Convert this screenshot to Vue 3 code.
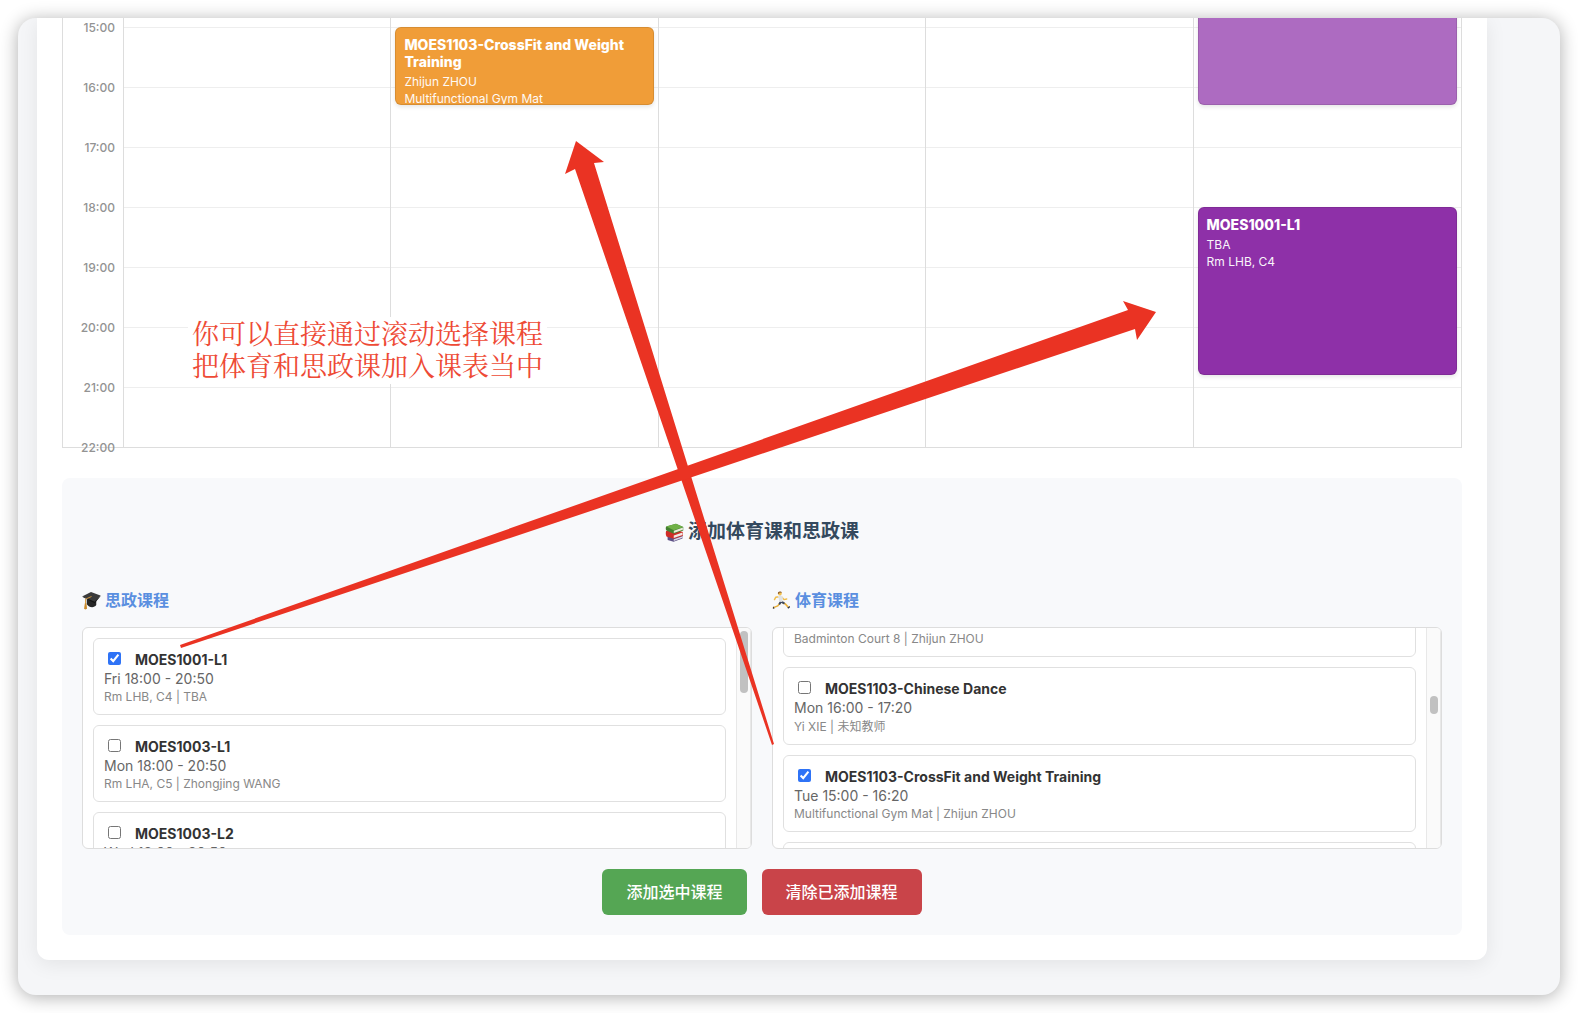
<script setup>
import { onMounted, ref } from 'vue'

const FIRST_HOUR = 15
const HOUR_HEIGHT = 60
const TOP_STRIP = 9

const hours = ['15:00', '16:00', '17:00', '18:00', '19:00', '20:00', '21:00', '22:00']

const days = [
  { name: 'Mon', events: [] },
  {
    name: 'Tue',
    events: [
      {
        title: 'MOES1103-CrossFit and Weight Training',
        lines: ['Zhijun ZHOU', 'Multifunctional Gym Mat'],
        start: 15 * 60,
        length: 80,
        tone: 'orange',
      },
    ],
  },
  { name: 'Wed', events: [] },
  { name: 'Thu', events: [] },
  {
    name: 'Fri',
    events: [
      { title: '', lines: [], start: 13 * 60 + 30, length: 170, tone: 'lilac' },
      { title: 'MOES1001-L1', lines: ['TBA', 'Rm LHB, C4'], start: 18 * 60, length: 170, tone: 'purple' },
    ],
  },
]

const politics = ref([
  { id: 'p1', name: 'MOES1001-L1', time: 'Fri 18:00 - 20:50', info: 'Rm LHB, C4 | TBA', checked: true },
  { id: 'p2', name: 'MOES1003-L1', time: 'Mon 18:00 - 20:50', info: 'Rm LHA, C5 | Zhongjing WANG', checked: false },
  { id: 'p3', name: 'MOES1003-L2', time: 'Wed 18:00 - 20:50', info: '', checked: false },
])

const sports = ref([
  { id: 's1', name: '', time: '', info: 'Badminton Court 8 | Zhijun ZHOU', checked: false },
  { id: 's2', name: 'MOES1103-Chinese Dance', time: 'Mon 16:00 - 17:20', info: 'Yi XIE | 未知教师', lang: 'zh', checked: false },
  { id: 's3', name: 'MOES1103-CrossFit and Weight Training', time: 'Tue 15:00 - 16:20', info: 'Multifunctional Gym Mat | Zhijun ZHOU', checked: true },
  { id: 's4', name: '', time: '', info: '', checked: false },
])

const sportsList = ref(null)

function place(event) {
  return {
    top: `${TOP_STRIP + ((event.start - FIRST_HOUR * 60) * HOUR_HEIGHT) / 60}px`,
    height: `${(event.length * HOUR_HEIGHT) / 60 - 2}px`,
  }
}

onMounted(() => {
  sportsList.value.scrollTop = 58
})
</script>

<template>
  <div class="window">
    <main class="card">
      <div class="timetable">
        <div class="hours">
          <span v-for="hour in hours" :key="hour" class="hour">{{ hour }}</span>
        </div>
        <div class="days">
          <div v-for="day in days" :key="day.name" class="day">
            <div class="strip"></div>
            <div v-for="n in 7" :key="n" class="slot"></div>
            <article
              v-for="event in day.events"
              :key="event.start"
              class="event"
              :class="event.tone"
              :style="place(event)"
            >
              <strong v-if="event.title" class="event-title">{{ event.title }}</strong>
              <span v-for="line in event.lines" :key="line" class="event-line">{{ line }}</span>
            </article>
          </div>
        </div>
      </div>

      <section class="picker">
        <h2 class="picker-title">
          <svg class="emoji" viewBox="0 0 20 20" aria-hidden="true">
            <path d="M2.600 13.500l6.600 2.200 9.200-3v3.500l-9.400 3.600-6.200-2z" fill="#5d5186" />
            <path d="M9.200 17.200l9.200-3.300v1.600l-9.200 3.400z" fill="#dcd8e6" />
            <path d="M1.200 8.500L10 6.500l8.800 3v4l-9.700 3.200-7.600-2.500C.6 12.500.6 10 1.200 8.500z" fill="#cf2d27" />
            <path d="M9.200 13.200l9.200-3.100v2.500l-9.200 3.100z" fill="#f1e9e6" />
            <path d="M1.200 3.700L11.500.8l7.700 3.300v3.700L9.100 11.400 1.500 8C.6 6.800.6 5 1.200 3.700z" fill="#437f30" />
            <path d="M1.400 3.700L11.500.8l7.700 3.300-10 3.500z" fill="#70b147" />
            <path d="M9.300 8.200l9.500-3.400v2.400l-9.500 3.300z" fill="#e9eddc" />
          </svg>
          <span>添加体育课和思政课</span>
        </h2>

        <div class="columns">
          <div class="column">
            <h3 class="column-title">
              <svg class="emoji" viewBox="0 0 20 20" aria-hidden="true">
                <path d="M5 8.500l10 2v4.300c-1.500 2.300-4.800 3-7.500 1.400C6 15.400 5.200 14.500 5 13.500z" fill="#262626" />
                <path d="M.6 5.500L9.500 1.100l9.900 3.600-6.100 7.400z" fill="#3b3b3b" />
                <path d="M.6 5.500l12.700 5.900 6.100-6.700v.9l-6 7.400L.7 6.400z" fill="#141414" />
                <path d="M10 5.800L3.700 8.600v5" fill="none" stroke="#d79a3a" stroke-width="1" />
                <path d="M3 13h1.700l.6 5.800-1.800.6-1.300-.7z" fill="#c98a2c" />
              </svg>
              <span>思政课程</span>
            </h3>
            <div class="list">
              <div class="scroll">
                <div v-for="course in politics" :key="course.id" class="course">
                  <label class="course-head" :for="course.id">
                    <input :id="course.id" v-model="course.checked" type="checkbox" class="tick" />
                    <span class="course-name">{{ course.name }}</span>
                  </label>
                  <div class="course-time">{{ course.time }}</div>
                  <div class="course-info" :lang="course.lang">{{ course.info }}</div>
                </div>
              </div>
              <div class="track"><div class="thumb thumb-long"></div></div>
            </div>
          </div>

          <div class="column">
            <h3 class="column-title">
              <svg class="emoji" viewBox="0 0 20 20" aria-hidden="true">
                <path d="M9 12.200l-3 3.500-4.500 1.800" fill="none" stroke="#e9b13c" stroke-width="1.700" stroke-linecap="round" />
                <path d="M10 11.500l4 2.200 2.800 3" fill="none" stroke="#e9b13c" stroke-width="1.700" stroke-linecap="round" />
                <path d="M9.600 11L8 13.400M9.800 11.200l2.600 1.500" fill="none" stroke="#3d4a63" stroke-width="2.200" stroke-linecap="round" />
                <path d="M7 6L4 6.500 2.600 9M10.500 6.500l2.200 2.600 2.800-.7" fill="none" stroke="#f0bd49" stroke-width="1.500" stroke-linecap="round" stroke-linejoin="round" />
                <path d="M5.800 5.300l3.700-.8 2 2.300-.6 4.700-3.300-.3-.6-4z" fill="#dfe2e4" />
                <circle cx="8.300" cy="2.700" r="2" fill="#f3c14e" />
                <path d="M6.200 2.700C6 .9 7.500.1 9 .5c1 .2 1.500.8 1.400 1.400L8 1.600l-.7 1.500z" fill="#8a5a2b" />
                <path d="M1.300 16.100l1.500 2.200-1.900.4zM16.200 17.300l2.600-1.600.2 1.300-2 1.600z" fill="#2f3340" />
              </svg>
              <span>体育课程</span>
            </h3>
            <div class="list">
              <div ref="sportsList" class="scroll">
                <div v-for="course in sports" :key="course.id" class="course">
                  <label class="course-head" :for="course.id">
                    <input :id="course.id" v-model="course.checked" type="checkbox" class="tick" />
                    <span class="course-name">{{ course.name }}</span>
                  </label>
                  <div class="course-time">{{ course.time }}</div>
                  <div class="course-info" :lang="course.lang">{{ course.info }}</div>
                </div>
              </div>
              <div class="track"><div class="thumb thumb-short"></div></div>
            </div>
          </div>
        </div>

        <div class="actions">
          <button type="button" class="button add">添加选中课程</button>
          <button type="button" class="button clear">清除已添加课程</button>
        </div>
      </section>
    </main>

    <p class="note">你可以直接通过滚动选择课程<br />把体育和思政课加入课表当中</p>
    <svg class="arrows" viewBox="18 18 1542 977" aria-hidden="true">
      <polygon points="576,141 604,162 594,163 774,744 772,745 575,169 565,174" />
      <polygon points="1156,312 1137,340 1135,329 181,648 180,645 1128,310 1123,301" />
    </svg>
  </div>
</template>

<style>
body {
  margin: 0;
  background: #fff;
}
</style>

<style scoped>
.window {
  position: relative;
  box-sizing: border-box;
  margin: 18px;
  padding: 0 73px 35px 19px;
  overflow: hidden;
  border-radius: 18px;
  background: #f5f6f8;
  box-shadow: 0 2px 18px rgba(0, 0, 0, 0.32);
  font-family: Inter, "Noto Sans CJK SC", sans-serif;
  color: #333;
}

.card {
  padding: 0 25px 25px;
  border-radius: 0 0 12px 12px;
  background: #fff;
  box-shadow: 0 4px 20px rgba(0, 0, 0, 0.08);
}

.timetable {
  display: flex;
  border: 1px solid #ddd;
  border-top: 0;
}

.hours {
  display: flex;
  flex-direction: column;
  gap: 42px;
  box-sizing: border-box;
  width: 60px;
  margin-bottom: -10px;
  padding: 1px 8px 0 0;
  text-align: right;
}

.hour {
  font-size: 12px;
  font-weight: 500;
  line-height: 18px;
  color: #939393;
}

.days {
  display: grid;
  flex: 1;
  grid-template-columns: repeat(5, 1fr);
  border-left: 1px solid #ddd;
}

.day {
  position: relative;
  border-right: 1px solid #ddd;
}

.day:last-child {
  border-right: 0;
}

.strip {
  height: 9px;
}

.slot {
  box-sizing: border-box;
  height: 60px;
  border-top: 1px solid #eee;
}

.event {
  position: absolute;
  right: 4px;
  left: 4px;
  display: flex;
  flex-direction: column;
  box-sizing: border-box;
  padding: 8px;
  overflow: hidden;
  border: 1px solid rgba(0, 0, 0, 0.1);
  border-radius: 6px;
  box-shadow: 0 2px 4px rgba(0, 0, 0, 0.1);
  color: #fff;
}

.orange {
  background: #f09d38;
}

.lilac {
  background: #ad6bc1;
}

.purple {
  background: #8e30a8;
}

.event-title {
  margin-bottom: 3px;
  font-size: 14px;
  font-weight: 800;
  line-height: 17px;
}

.event-line {
  flex: none;
  font-size: 12px;
  line-height: 17px;
  opacity: 0.95;
}

.picker {
  margin-top: 30px;
  padding: 20px;
  border-radius: 8px;
  background: #f8f9fb;
}

.picker-title,
.column-title {
  display: flex;
  align-items: center;
  gap: 4px;
  font-weight: 700;
}

.picker-title {
  justify-content: center;
  margin: 21px 0 43px;
  font-size: 19px;
  line-height: 26px;
  color: #34495e;
}

.column-title {
  margin: 0 0 15px;
  font-size: 16px;
  line-height: 24px;
  color: #5a8fe0;
}

.emoji {
  width: 19px;
  height: 19px;
}

.columns {
  display: grid;
  grid-template-columns: 1fr 1fr;
  gap: 20px;
}

.list {
  display: flex;
  box-sizing: border-box;
  height: 222px;
  overflow: hidden;
  border: 1px solid #ddd;
  border-radius: 6px;
  background: #fff;
}

.scroll {
  display: flex;
  flex: 1;
  flex-direction: column;
  gap: 10px;
  padding: 10px;
  overflow: hidden;
}

.course {
  flex: none;
  padding: 10px 10px 9px;
  border: 1px solid #e0e0e0;
  border-radius: 6px;
}

.course-head {
  display: flex;
  align-items: center;
  gap: 14px;
  height: 21px;
  line-height: 21px;
}

.tick {
  width: 13px;
  height: 13px;
  margin: 0 0 2px 4px;
  accent-color: #2f73f6;
}

.course-name {
  font-size: 14px;
  font-weight: 700;
}

.course-time {
  min-height: 17px;
  font-size: 14px;
  line-height: 17px;
  color: #666;
}

.course-info {
  min-height: 16px;
  margin-top: 2px;
  font-size: 12px;
  line-height: 16px;
  color: #888;
}

.course-info:lang(zh) {
  line-height: 17px;
}

.track {
  box-sizing: border-box;
  width: 15px;
  padding: 3px 2px 0 3px;
  border-right: 1px solid #e8e8e8;
  border-left: 1px solid #e8e8e8;
  background: #fafafa;
}

.thumb {
  width: 8px;
  border-radius: 4px;
  background: #c1c1c1;
}

.thumb-long {
  height: 62px;
}

.thumb-short {
  height: 18px;
  margin-top: 65px;
}

.actions {
  display: flex;
  justify-content: center;
  gap: 15px;
  margin-top: 20px;
}

.button {
  height: 46px;
  padding: 0 24px 2px;
  border: 0;
  border-radius: 6px;
  font-family: inherit;
  font-size: 16px;
  font-weight: 500;
  color: #fff;
}

.add {
  background: #55a654;
}

.clear {
  background: #c94449;
}

.note {
  position: absolute;
  top: 299px;
  left: 170px;
  margin: 0;
  padding: 0 4px 3px;
  background: #fff;
  font-family: "Noto Serif CJK SC", "Noto Sans CJK SC", serif;
  font-size: 27px;
  font-weight: 400;
  line-height: 32px;
  color: #ee4a35;
}

.arrows {
  position: absolute;
  top: 0;
  left: 0;
  width: 100%;
  fill: #ea3323;
}
</style>
